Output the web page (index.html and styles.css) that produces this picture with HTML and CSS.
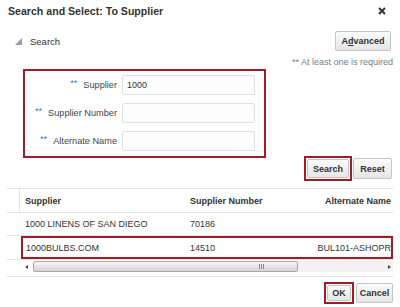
FILE: index.html
```html
<!DOCTYPE html>
<html lang="en">

<head>
    <meta charset="UTF-8">
    <meta name="viewport" content="width=device-width, initial-scale=1.0">
    <title>Search and Select: To Supplier</title>
    <link rel="stylesheet" href="styles.css">
</head>

<body>
    <div class="dialog">
        <!--barre de titre-->
        <div class="titlebar">
            <span class="title">Search and Select: To Supplier</span>
            <svg class="close" width="8" height="8" viewBox="0 0 8 8">
                <path d="M1 1L7 7M7 1L1 7" stroke="#333" stroke-width="2" />
            </svg>
        </div>

        <div class="panel-head">
            <div class="disclose">
                <svg class="tri" width="7" height="7" viewBox="0 0 7 7">
                    <polygon points="0,7 7,7 7,0" fill="#9a9a9a" />
                </svg>
                <span>Search</span>
            </div>
            <button type="button" class="btn btn-adv">A<u>d</u>vanced</button>
        </div>
        <div class="required">** At least one is required</div>

        <!--criteres de recherche-->
        <div class="form-box">
            <div class="field">
                <label><span class="req">**</span>Supplier</label>
                <input type="text" value="1000">
            </div>
            <div class="field">
                <label><span class="req">**</span>Supplier Number</label>
                <input type="text">
            </div>
            <div class="field">
                <label><span class="req">**</span>Alternate Name</label>
                <input type="text">
            </div>
        </div>

        <div class="actions">
            <span class="mark"><button type="button" class="btn btn-search">Search</button></span>
            <button type="button" class="btn btn-reset">Reset</button>
        </div>

        <!--resultats-->
        <div class="results">
            <div class="row head">
                <div class="gutter"></div>
                <div class="cells">
                    <div class="c1">Supplier</div>
                    <div class="c2">Supplier Number</div>
                    <div class="c3">Alternate Name</div>
                </div>
            </div>
            <div class="row">
                <div class="gutter"></div>
                <div class="cells">
                    <div class="c1">1000 LINENS OF SAN DIEGO</div>
                    <div class="c2">70186</div>
                    <div class="c3"></div>
                </div>
            </div>
            <div class="row">
                <div class="gutter"></div>
                <div class="cells picked">
                    <div class="c1">1000BULBS.COM</div>
                    <div class="c2">14510</div>
                    <div class="c3">BUL101-ASHOPR</div>
                </div>
            </div>
            <div class="row scroll">
                <div class="gutter"></div>
                <div class="hscroll">
                    <div class="arrow-box"><span class="arrow-left"></span></div>
                    <div class="thumb">
                        <svg width="5" height="5" viewBox="0 0 5 5">
                            <path d="M0.5 0V5M2.5 0V5M4.5 0V5" stroke="#8a8a8a" stroke-width="1" />
                        </svg>
                    </div>
                    <div class="track"><span class="arrow-right"></span></div>
                </div>
            </div>
        </div>

        <div class="footer">
            <span class="mark"><button type="button" class="btn btn-ok">OK</button></span>
            <button type="button" class="btn btn-cancel">Cancel</button>
        </div>
    </div>
</body>

</html>
```

FILE: styles.css
```css
body {
    font-family: "Liberation Sans", Arial, sans-serif;
    margin: 0;
    padding: 0;
    background-color: white;
    color: #333;
    font-size: 9px;
}

.dialog {
    width: 400px;
    height: 307px;
    overflow: hidden;
}

.titlebar {
    height: 22px;
    padding: 0 14px 0 8px;
    display: flex;
    justify-content: space-between;
    align-items: center;
}

.title {
    font-size: 10.6px;
    font-weight: bold;
    color: #333;
}

.panel-head {
    margin-top: 9px;
    height: 20px;
    padding: 0 9px 0 15px;
    display: flex;
    justify-content: space-between;
    align-items: center;
}

.disclose {
    display: flex;
    align-items: center;
    gap: 8px;
    font-size: 9.5px;
    color: #333;
}

.btn {
    font-family: "Liberation Sans", Arial, sans-serif;
    font-size: 9px;
    font-weight: bold;
    color: #333;
    background: linear-gradient(#fbfbfb, #e6e6e6);
    border: 1px solid #c5c5c5;
    border-radius: 2px;
    padding: 0;
    box-sizing: border-box;
}

.btn-adv {
    width: 56px;
    height: 20px;
}

.required {
    margin-top: 6px;
    line-height: 11px;
    text-align: right;
    padding-right: 7px;
    color: #6d7f90;
}

.form-box {
    margin: 1px 0 0 23px;
    width: 243px;
    box-sizing: border-box;
    border: 2px solid #a01d26;
    padding: 4px 9px 5px 0;
}

.field {
    display: flex;
    gap: 5px;
    height: 20px;
    margin-bottom: 8px;
}

.field:last-child {
    margin-bottom: 0;
}

.field label {
    width: 92px;
    display: flex;
    justify-content: flex-end;
    align-items: center;
    font-size: 9.2px;
    color: #444;
}

.req {
    color: #3a78c4;
    margin-right: 6px;
    position: relative;
    top: -2px;
}

.field input {
    width: 133px;
    height: 20px;
    box-sizing: border-box;
    border: 1px solid #dde1e5;
    border-radius: 2px;
    padding: 0 4px;
    font-family: "Liberation Sans", Arial, sans-serif;
    font-size: 9px;
    color: #333;
    background-color: #fdfdfd;
}

.actions {
    margin-top: -2px;
    height: 25px;
    display: flex;
    justify-content: flex-end;
    align-items: center;
    gap: 1px;
    padding-right: 8px;
}

.mark {
    display: inline-flex;
    border: 2px solid #a01d26;
    padding: 1px;
}

.btn-search {
    width: 42px;
    height: 19px;
}

.btn-reset {
    width: 39px;
    height: 21px;
}

.results {
    margin: 7px 7px 0;
    border-top: 1px solid #e3e3e3;
}

.row {
    display: flex;
    border-bottom: 1px solid #e3e3e3;
}

.gutter {
    width: 13px;
    flex: none;
}

.head .gutter {
    width: 12px;
    border-right: 1px solid #e3e3e3;
}

.cells {
    flex: 1;
    display: flex;
    align-items: center;
    height: 22px;
    overflow: hidden;
    white-space: nowrap;
}

.head .cells {
    height: 23px;
    font-weight: bold;
}

.c1 {
    width: 170px;
    padding-left: 5px;
    box-sizing: border-box;
    flex: none;
}

.c2 {
    width: 120px;
    flex: none;
}

.c3 {
    flex: 1;
    text-align: right;
    padding-right: 2px;
}

.picked {
    height: 23px;
    box-sizing: border-box;
    border: 2px solid #a01d26;
    margin-left: 1px;
}

.picked .c1 {
    width: 167px;
    padding-left: 3px;
}

.picked .c3 {
    padding-right: 0;
}

.scroll {
    height: 16px;
}

.hscroll {
    flex: 1;
    display: flex;
    height: 11px;
    margin: 1px 0 0 1px;
}

.arrow-box {
    width: 12px;
    display: flex;
    align-items: center;
    padding-left: 4px;
    box-sizing: border-box;
}

.arrow-left {
    width: 0;
    height: 0;
    border-top: 2.5px solid transparent;
    border-bottom: 2.5px solid transparent;
    border-right: 3px solid #444;
}

.thumb {
    width: 265px;
    box-sizing: border-box;
    border: 1px solid #a9a9a9;
    border-radius: 2px;
    background: linear-gradient(#f6f6f6, #d4d4d4);
    display: flex;
    justify-content: flex-end;
    align-items: center;
    padding-right: 33px;
}

.track {
    flex: 1;
    background-color: #f1f1f1;
    display: flex;
    justify-content: flex-end;
    align-items: center;
    padding-right: 2px;
}

.arrow-right {
    width: 0;
    height: 0;
    border-top: 2.5px solid transparent;
    border-bottom: 2.5px solid transparent;
    border-left: 3px solid #444;
}

.footer {
    margin-top: 5px;
    display: flex;
    justify-content: flex-end;
    align-items: center;
    gap: 2px;
    padding-right: 7px;
}

.btn-ok {
    width: 24px;
    height: 16px;
}

.btn-cancel {
    width: 37px;
    height: 20px;
}
```
